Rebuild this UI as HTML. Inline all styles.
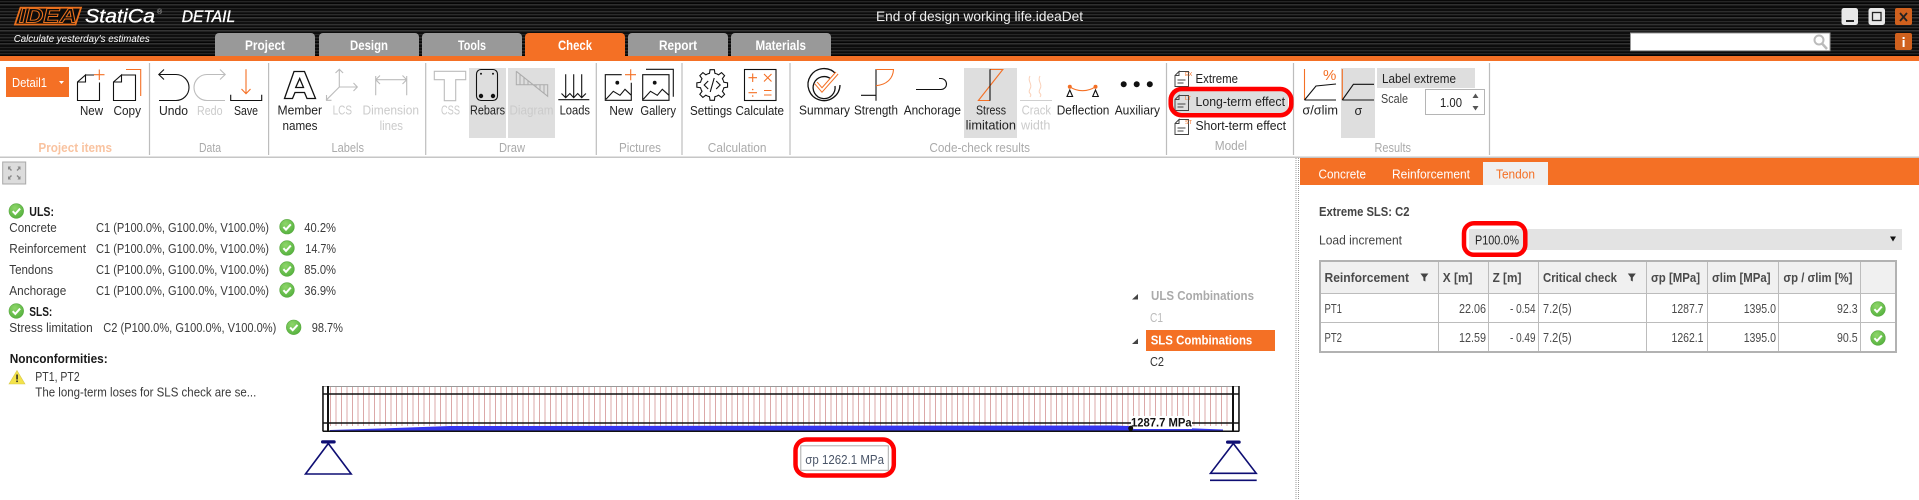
<!DOCTYPE html>
<html><head><meta charset="utf-8"><title>End of design working life.ideaDet</title>
<style>
html,body{margin:0;padding:0;width:1919px;height:500px;overflow:hidden;background:#fff}
#hd{position:absolute;left:0;top:0;width:1919px;height:56px;background:linear-gradient(180deg,rgba(0,0,0,.2),rgba(20,20,20,0) 40%,rgba(0,0,0,.2)),repeating-linear-gradient(180deg,#0d0d0d 0 1px,#2e2e2e 1px 2px,#161616 2px 3px,#060606 3px 4px,#383838 4px 5px,#242424 5px 6px,#0e0e0e 6px 8px,#2a2a2a 8px 9px,#111 9px 11px,#333 11px 12px,#1a1a1a 12px 13px)}
svg{position:absolute;left:0;top:0}
text{font-family:"Liberation Sans",sans-serif;font-size:12.5px;fill:#222;white-space:pre}
.d{fill:#cbcbcb}.l{fill:#aaa}.w{fill:#fff}.tab{fill:#fff;font-weight:bold;font-size:13.5px}
.s{font-size:12.5px;fill:#3a3a3a}.b{font-weight:bold;fill:#1a1a1a;font-size:13px}
.c{font-size:12.5px;fill:#4a4a4a}.h{font-size:12.5px;font-weight:bold;fill:#4a4a4a}
.k{fill:none;stroke:#111;stroke-width:1.1}.o{fill:none;stroke:#f47025;stroke-width:1.1}.g{fill:none;stroke:#bcbcbc;stroke-width:1.1}
.red{fill:none;stroke:#f00;stroke-width:4.5}
.sep{stroke:#bdbdbd;stroke-width:1.2}
</style></head><body>
<div id="hd"></div>
<svg width="1919" height="500" viewBox="0 0 1919 500" xmlns="http://www.w3.org/2000/svg">
<defs>
<radialGradient id="gr" cx=".4" cy=".3" r=".8"><stop offset="0" stop-color="#8fd66a"/><stop offset="1" stop-color="#4fae3a"/></radialGradient>
<g id="ok"><circle r="7.3" fill="url(#gr)" stroke="#58a83f" stroke-width=".6"/><path d="M-3.6 .2L-1 2.9 3.8-2.4" fill="none" stroke="#fff" stroke-width="2"/></g>
<path id="tooth" d="M11.09-4.59L11.69-2.7 15.35-2.16V2.16L11.69 2.7 11.09 4.59" fill="none" stroke="#111" stroke-width="1.1"/>
<path id="flt" d="M-4-4H4L1 0V4L-1 3V0Z" fill="#444"/>
<g id="doc"><path d="M4.5.5H14V15.5H.5V4.5L4.5.5V4.5H.5M3 9H11M3 12H9" fill="none" stroke="#444" stroke-width="1"/></g>
<pattern id="st" x="328" y="0" width="5.5" height="10" patternUnits="userSpaceOnUse"><rect x="2" width="1" height="10" fill="#dba8a8"/></pattern>
</defs>

<!-- header -->
<path d="M20.5 7.7H81L75.5 24.5H15Z" fill="#0c0c0c" stroke="#e8701e" stroke-width="1.8"/>
<text x="19" y="22.5" textLength="58" lengthAdjust="spacingAndGlyphs" style="font-size:20px;font-weight:bold;font-style:italic;fill:#0c0c0c;stroke:#e8701e;stroke-width:.9">IDEA</text>
<text x="85" y="22.7" textLength="70" lengthAdjust="spacingAndGlyphs" style="font-size:19px;font-style:italic;fill:#fff;stroke:#fff;stroke-width:.3">StatiCa</text>
<text x="157" y="14" style="font-size:7px;fill:#bbb">®</text>
<text x="181.7" y="22" textLength="53.5" lengthAdjust="spacingAndGlyphs" style="font-size:16.5px;font-style:italic;fill:#fff;stroke:#fff;stroke-width:.35">DETAIL</text>
<text x="13.7" y="42" textLength="136" lengthAdjust="spacingAndGlyphs" style="font-size:10px;font-style:italic;fill:#fff">Calculate yesterday's estimates</text>
<text x="876" y="21" textLength="207" lengthAdjust="spacingAndGlyphs" style="font-size:14px;fill:#eee">End of design working life.ideaDet</text>

<path d="M215 56V37a4 4 0 0 1 4-4H311a4 4 0 0 1 4 4V56Z" fill="#999"/>
<path d="M319 56V37a4 4 0 0 1 4-4H415a4 4 0 0 1 4 4V56Z" fill="#999"/>
<path d="M422 56V37a4 4 0 0 1 4-4H518a4 4 0 0 1 4 4V56Z" fill="#999"/>
<path d="M525 56V37a4 4 0 0 1 4-4H621a4 4 0 0 1 4 4V56Z" fill="#f47025"/>
<path d="M628 56V37a4 4 0 0 1 4-4H724a4 4 0 0 1 4 4V56Z" fill="#999"/>
<path d="M731 56V37a4 4 0 0 1 4-4H827a4 4 0 0 1 4 4V56Z" fill="#999"/>
<text class="tab" x="245" y="50" textLength="40" lengthAdjust="spacingAndGlyphs">Project</text>
<text class="tab" x="350" y="50" textLength="38" lengthAdjust="spacingAndGlyphs">Design</text>
<text class="tab" x="458" y="50" textLength="28" lengthAdjust="spacingAndGlyphs">Tools</text>
<text class="tab" x="558" y="50" textLength="34" lengthAdjust="spacingAndGlyphs">Check</text>
<text class="tab" x="659" y="50" textLength="38" lengthAdjust="spacingAndGlyphs">Report</text>
<text class="tab" x="755.5" y="50" textLength="50.5" lengthAdjust="spacingAndGlyphs">Materials</text>

<rect x="1630.5" y="33" width="199.5" height="17.7" fill="#fff" stroke="#999"/>
<circle cx="1819" cy="40" r="4.5" fill="none" stroke="#bbb" stroke-width="2"/><path d="M1822 43.5L1827 49" stroke="#bbb" stroke-width="2.5"/>
<rect x="1841.5" y="8" width="16.5" height="17" rx="2.5" fill="#e8e8e8"/><rect x="1846" y="20" width="8" height="2" fill="#222"/>
<rect x="1868.5" y="8" width="16.5" height="17" rx="2.5" fill="#e8e8e8"/><rect x="1872.5" y="12.5" width="8.5" height="8" fill="none" stroke="#222" stroke-width="1.3"/>
<rect x="1895" y="8" width="17" height="17" rx="2" fill="#d0611e"/><path d="M1900 13L1907 21M1907 13L1900 21" stroke="#222" stroke-width="1.8"/>
<rect x="1895" y="33" width="17" height="17" rx="2" fill="#d0611e"/><rect x="1902.6" y="37" width="2" height="2" fill="#fff"/><rect x="1902.6" y="40" width="2" height="7" fill="#fff"/>

<!-- ribbon -->
<rect x="0" y="56" width="1919" height="5" fill="#f47025"/>
<rect x="0" y="156.5" width="1919" height="1.5" fill="#c6c6c6"/>
<path class="sep" d="M149.5 63V155M268.6 63V155M425.7 63V155M596.3 63V155M682 63V155M790 63V155M1166.5 63V155M1293.5 63V155M1489.5 63V155"/>

<rect x="469" y="68" width="37" height="70" fill="#dedede"/>
<rect x="508" y="68" width="47" height="70" fill="#dedede"/>
<rect x="964" y="68" width="53" height="70" fill="#dedede"/>
<rect x="1341" y="68" width="34" height="70" fill="#dedede"/>
<rect x="1377" y="68" width="98" height="20" fill="#dedede"/>
<rect x="1172" y="90" width="116" height="23.5" fill="#dedede"/>

<rect x="6" y="67" width="63" height="30" fill="#f47025"/>
<text class="w" x="12" y="87" textLength="35" lengthAdjust="spacingAndGlyphs" style="font-size:13px">Detail1</text>
<path d="M59 81H64L61.5 84Z" fill="#fff"/>

<!-- New / Copy -->
<path class="k" d="M85.5 75H94M99.5 82.5V100.5H77.5V82L85.5 75V82H77.5"/>
<path class="o" d="M94 74.7H104.5M99.3 69.5V80"/>
<path class="k" d="M121.5 75H135.5V100.5H113.5V82L121.5 75V82H113.5"/>
<path class="o" d="M126 69.5H140.7V96"/>
<!-- Undo Redo Save -->
<path class="k" d="M164 69.5L158.8 74.5 164 79.5M159 74.5H176a13 13 0 0 1 0 26H159"/>
<path class="g" d="M220 69.5L225.2 74.5 220 79.5M225 74.5H207a13 13 0 0 0 0 26H225"/>
<path class="k" d="M230.7 94.7V100.5H261.7V94.7"/>
<path class="o" d="M246 69.3V93.7M241.5 89L246 93.7 250.5 89"/>
<!-- Labels -->
<path class="k" style="stroke-width:1.3" d="M294 71.5H304.5L315.5 98.5H307L304.5 92.5H295L292.5 98.5H284.5ZM299.7 78.5L303.5 87.5H295.7Z"/>
<path class="g" d="M339.3 69.3V87M335.5 73L339.3 69.3 343.1 73M339.3 87H357.3M353.5 83L357.3 87 353.5 91M339.3 87L326 100.3M326.5 95V100.3H331.5"/>
<path class="g" d="M375.7 76V95.3M406.7 76V95.3M375.7 79.7H406.7M380 75.5L375.7 79.7 380 84M402.5 75.5L406.7 79.7 402.5 84"/>
<!-- Draw -->
<path class="g" d="M434.3 71.3H465.7V79.7H455.7V100.7H444.3V79.7H434.3Z"/>
<rect class="k" x="476.5" y="69.5" width="21" height="31" rx="4.5"/>
<circle cx="481" cy="73.7" r="1" fill="#111"/><circle cx="493" cy="73.7" r="1" fill="#111"/><circle cx="481" cy="96" r="2.2" fill="#111"/><circle cx="493" cy="96" r="2.2" fill="#111"/>
<path fill="none" stroke="#ababab" d="M516.3 71.3V84.7H547.7V96.3L516.3 71.3M520 74.5V84.7M524 77.5V84.7M528 80.5V84.7M532 84.7V84M536 84.7V87.5M540 84.7V90.5M544 84.7V93.5"/>
<path class="k" d="M558.3 99.7H589.3M565.7 74.3V97.7M573.7 74.3V97.7M581.7 74.3V97.7M561.5 93.5L565.7 97.7 569.9 93.5 573.7 97.7 577.7 93.5 581.7 97.7 585.9 93.5"/>
<!-- Pictures -->
<path class="k" d="M621.7 74.7H605.3V100.3H631.3V82.7M606 99.3L613.3 91.3 620 95.3 625 89.3 631.3 95.3"/>
<circle cx="617.3" cy="82.7" r="1.9" fill="#111"/>
<path class="o" d="M625 74.7H636M630.7 69.2V80.2"/>
<path class="k" d="M642.7 74.7H669V100.3H642.7ZM646 69.3H673.3V96.7M643.3 99.3L650.5 91.3 657.3 95.3 662.3 89.3 669 95.3"/>
<circle cx="654.7" cy="82.7" r="1.9" fill="#111"/>
<!-- Calculation -->
<g transform="translate(712.2 85)"><use href="#tooth"/><use href="#tooth" transform="rotate(45)"/><use href="#tooth" transform="rotate(90)"/><use href="#tooth" transform="rotate(135)"/><use href="#tooth" transform="rotate(180)"/><use href="#tooth" transform="rotate(225)"/><use href="#tooth" transform="rotate(270)"/><use href="#tooth" transform="rotate(315)"/><path class="k" d="M-4-4L-8 0-4 4M4-4L8 0 4 4M2-7L-2 7"/></g>
<rect class="k" x="744.5" y="69.5" width="31.5" height="31"/>
<path class="o" d="M748.5 77.7H757M752.7 73.5V82M764 74L771.5 81.5M771.5 74L764 81.5M748.5 92.7H757M764 90.5H771.5M764 95H771.5"/><circle cx="752.7" cy="89.5" r=".8" fill="#f47025"/><circle cx="752.7" cy="96" r=".8" fill="#f47025"/>
<!-- Code-check -->
<path class="k" style="stroke-width:1.3" d="M836 74A16 16 0 1 0 840 85M831 79A11 11 0 1 0 835 86"/>
<path fill="none" stroke="#f47025" stroke-width="4" d="M816 83L822 90 837 73"/><path fill="none" stroke="#fff" stroke-width="2" d="M816 83L822 90 837 73"/>
<path class="k" d="M876 69.3V100.7M861 95.3H876"/><path class="o" d="M876 69.5H893.5C893 79 886 85 876 85.7"/>
<path class="k" d="M916 89.5H941a5.5 5.5 0 0 0 0-11H939"/>
<path class="o" d="M990 69.5H1002.8L978.4 100.5H990"/><path class="k" d="M990 69.3V100.7"/>
<path fill="none" stroke="#cfcfcf" d="M1020 100.5H1052"/><path fill="none" stroke="#fad0b8" d="M1030 76C1027 81 1033 84 1030 89S1033 93 1030 97M1040 76C1037 81 1043 84 1040 89S1043 93 1040 97"/>
<path class="o" d="M1069.8 86.7C1077 92 1088 92 1095.5 86.7"/><circle cx="1069.8" cy="86.7" r="2" fill="#f47025"/><circle cx="1095.5" cy="86.7" r="2" fill="#f47025"/>
<path class="k" d="M1069.8 90L1067 96.5H1072.6ZM1095.5 90L1092.7 96.5H1098.3Z"/>
<circle cx="1123.7" cy="84.3" r="3" fill="#111"/><circle cx="1136.7" cy="84.3" r="3" fill="#111"/><circle cx="1149.8" cy="84.3" r="3" fill="#111"/>
<!-- Model -->
<use href="#doc" x="1174.5" y="71"/><use href="#doc" x="1174.5" y="95"/><use href="#doc" x="1174.5" y="119"/>
<text x="1185" y="76" style="font-size:5.5px;fill:#f47025">EX</text><text x="1185" y="100" style="font-size:5.5px;fill:#f47025">LT</text><text x="1185" y="124" style="font-size:5.5px;fill:#f47025">ST</text>
<rect class="red" x="1170.7" y="89" width="120.6" height="26.2" rx="11"/>
<!-- Results -->
<path class="o" d="M1304.5 69V100"/><path class="k" d="M1304.5 100H1336M1304.5 100L1316 86 1336 84"/>
<text x="1323" y="80" style="font-size:15px;fill:#f47025">%</text>
<path class="o" d="M1342.3 69V100"/><path class="k" d="M1342.3 100H1374M1342.3 100L1353.4 84.3H1374"/>
<rect x="1425.5" y="89.5" width="59" height="25" fill="#fff" stroke="#b5b5b5"/>
<path d="M1472.5 98L1475.5 93.5 1478.5 98ZM1472.5 106L1475.5 110.5 1478.5 106Z" fill="#555"/>

<!-- ribbon text -->
<text x="80" y="115" textLength="23" lengthAdjust="spacingAndGlyphs">New</text>
<text x="113.5" y="115" textLength="27.5" lengthAdjust="spacingAndGlyphs">Copy</text>
<text x="159" y="115" textLength="29" lengthAdjust="spacingAndGlyphs">Undo</text>
<text class="d" x="197" y="115" textLength="25.5" lengthAdjust="spacingAndGlyphs">Redo</text>
<text x="234" y="115" textLength="24" lengthAdjust="spacingAndGlyphs">Save</text>
<text x="277.5" y="114.5" textLength="44.5" lengthAdjust="spacingAndGlyphs">Member</text>
<text x="282.5" y="130" textLength="35" lengthAdjust="spacingAndGlyphs">names</text>
<text class="d" x="332.6" y="114.5" textLength="19.4" lengthAdjust="spacingAndGlyphs">LCS</text>
<text class="d" x="362.5" y="114.5" textLength="56.5" lengthAdjust="spacingAndGlyphs">Dimension</text>
<text class="d" x="379.6" y="130" textLength="23.4" lengthAdjust="spacingAndGlyphs">lines</text>
<text class="d" x="441" y="114.5" textLength="19" lengthAdjust="spacingAndGlyphs">CSS</text>
<text x="470" y="114.5" textLength="35" lengthAdjust="spacingAndGlyphs">Rebars</text>
<text class="d" x="509.5" y="114.5" textLength="44" lengthAdjust="spacingAndGlyphs">Diagram</text>
<text x="559.6" y="114.5" textLength="30.4" lengthAdjust="spacingAndGlyphs">Loads</text>
<text x="609.4" y="115" textLength="23.6" lengthAdjust="spacingAndGlyphs">New</text>
<text x="640.4" y="115" textLength="35.6" lengthAdjust="spacingAndGlyphs">Gallery</text>
<text x="690" y="115" textLength="42" lengthAdjust="spacingAndGlyphs">Settings</text>
<text x="735.5" y="115" textLength="48.5" lengthAdjust="spacingAndGlyphs">Calculate</text>
<text x="799" y="114.5" textLength="51" lengthAdjust="spacingAndGlyphs">Summary</text>
<text x="854" y="114.5" textLength="44" lengthAdjust="spacingAndGlyphs">Strength</text>
<text x="903.7" y="114.5" textLength="57.3" lengthAdjust="spacingAndGlyphs">Anchorage</text>
<text x="976" y="114.5" textLength="30" lengthAdjust="spacingAndGlyphs">Stress</text>
<text x="965.7" y="129.5" textLength="50.3" lengthAdjust="spacingAndGlyphs">limitation</text>
<text class="d" x="1021.6" y="114.5" textLength="29.4" lengthAdjust="spacingAndGlyphs">Crack</text>
<text class="d" x="1021" y="129.5" textLength="29.4" lengthAdjust="spacingAndGlyphs">width</text>
<text x="1056.7" y="114.5" textLength="52.7" lengthAdjust="spacingAndGlyphs">Deflection</text>
<text x="1114.7" y="114.5" textLength="45.3" lengthAdjust="spacingAndGlyphs">Auxiliary</text>
<text x="1195.5" y="83" textLength="42.5" lengthAdjust="spacingAndGlyphs">Extreme</text>
<text x="1195.5" y="106" textLength="89.5" lengthAdjust="spacingAndGlyphs">Long-term effect</text>
<text x="1195.5" y="130" textLength="90.5" lengthAdjust="spacingAndGlyphs">Short-term effect</text>
<text x="1302.4" y="114.5" textLength="35.6" lengthAdjust="spacingAndGlyphs">σ/σlim</text>
<text x="1354.5" y="115">σ</text>
<text x="1382" y="83" textLength="74" lengthAdjust="spacingAndGlyphs">Label extreme</text>
<text style="fill:#444" x="1381" y="103" textLength="27" lengthAdjust="spacingAndGlyphs">Scale</text>
<text x="1440" y="107" textLength="22" lengthAdjust="spacingAndGlyphs">1.00</text>

<text x="38.4" y="152" textLength="73.6" lengthAdjust="spacingAndGlyphs" style="fill:#f9c3a0;font-weight:bold">Project items</text>
<text class="l" x="199" y="152" textLength="22" lengthAdjust="spacingAndGlyphs">Data</text>
<text class="l" x="331.5" y="152" textLength="32.5" lengthAdjust="spacingAndGlyphs">Labels</text>
<text class="l" x="499" y="152" textLength="26" lengthAdjust="spacingAndGlyphs">Draw</text>
<text class="l" x="619" y="152" textLength="42" lengthAdjust="spacingAndGlyphs">Pictures</text>
<text class="l" x="707.8" y="152" textLength="58.7" lengthAdjust="spacingAndGlyphs">Calculation</text>
<text class="l" x="929.4" y="152" textLength="100.6" lengthAdjust="spacingAndGlyphs">Code-check results</text>
<text class="l" x="1214.7" y="150" textLength="32.3" lengthAdjust="spacingAndGlyphs">Model</text>
<text class="l" x="1374.5" y="152" textLength="36.5" lengthAdjust="spacingAndGlyphs">Results</text>

<!-- expand button -->
<rect x="2.7" y="162" width="23" height="22" fill="#dcdcdc" stroke="#a8a8a8"/>
<path d="M8 166.5H11L10 168 12 170 11 171 9 169 8 170ZM20.5 166.5H17.5L18.5 168 16.5 170 17.5 171 19.5 169 20.5 170ZM8 179.5H11L10 178 12 176 11 175 9 177 8 176ZM20.5 179.5H17.5L18.5 178 16.5 176 17.5 175 19.5 177 20.5 176Z" fill="#888"/>

<!-- left summary -->
<use href="#ok" x="16.3" y="211"/>
<text class="b" x="29.3" y="216" textLength="24.7" lengthAdjust="spacingAndGlyphs">ULS:</text>
<text class="s" x="9.3" y="232" textLength="47.4" lengthAdjust="spacingAndGlyphs">Concrete</text>
<text class="s" x="96" y="232" textLength="173" lengthAdjust="spacingAndGlyphs">C1 (P100.0%, G100.0%, V100.0%)</text>
<use href="#ok" x="287" y="226.7"/><text class="s" x="304.3" y="232" textLength="31.7" lengthAdjust="spacingAndGlyphs">40.2%</text>
<text class="s" x="9.3" y="253" textLength="76.7" lengthAdjust="spacingAndGlyphs">Reinforcement</text>
<text class="s" x="96" y="253" textLength="173" lengthAdjust="spacingAndGlyphs">C1 (P100.0%, G100.0%, V100.0%)</text>
<use href="#ok" x="287" y="248"/><text class="s" x="305.3" y="253" textLength="30.7" lengthAdjust="spacingAndGlyphs">14.7%</text>
<text class="s" x="9.3" y="274" textLength="43.7" lengthAdjust="spacingAndGlyphs">Tendons</text>
<text class="s" x="96" y="274" textLength="173" lengthAdjust="spacingAndGlyphs">C1 (P100.0%, G100.0%, V100.0%)</text>
<use href="#ok" x="287" y="269"/><text class="s" x="304.3" y="274" textLength="31.7" lengthAdjust="spacingAndGlyphs">85.0%</text>
<text class="s" x="9.3" y="295" textLength="57" lengthAdjust="spacingAndGlyphs">Anchorage</text>
<text class="s" x="96" y="295" textLength="173" lengthAdjust="spacingAndGlyphs">C1 (P100.0%, G100.0%, V100.0%)</text>
<use href="#ok" x="287" y="290"/><text class="s" x="304.3" y="295" textLength="31.7" lengthAdjust="spacingAndGlyphs">36.9%</text>
<use href="#ok" x="16.3" y="311"/>
<text class="b" x="29.3" y="316" textLength="23" lengthAdjust="spacingAndGlyphs">SLS:</text>
<text class="s" x="9.3" y="332" textLength="83.4" lengthAdjust="spacingAndGlyphs">Stress limitation</text>
<text class="s" x="103.3" y="332" textLength="173" lengthAdjust="spacingAndGlyphs">C2 (P100.0%, G100.0%, V100.0%)</text>
<use href="#ok" x="293.7" y="327.3"/><text class="s" x="311.7" y="332" textLength="31.3" lengthAdjust="spacingAndGlyphs">98.7%</text>
<text class="b" x="9.7" y="363" textLength="98" lengthAdjust="spacingAndGlyphs">Nonconformities:</text>
<path d="M17 370.5L25 384H9Z" fill="#f3e24a" stroke="#d8c94a" stroke-width=".6"/><rect x="16.3" y="374.5" width="1.5" height="5" fill="#222"/><rect x="16.3" y="380.5" width="1.5" height="1.6" fill="#222"/>
<text class="s" x="35.3" y="381" textLength="44.4" lengthAdjust="spacingAndGlyphs">PT1, PT2</text>
<text class="s" x="35.3" y="396.5" textLength="221" lengthAdjust="spacingAndGlyphs">The long-term loses for SLS check are se...</text>

<!-- tree -->
<path d="M1132 299.5H1138V294Z" fill="#444"/>
<text x="1151" y="300" textLength="103" lengthAdjust="spacingAndGlyphs" style="font-weight:bold;fill:#aaa">ULS Combinations</text>
<text x="1150" y="322" textLength="13" lengthAdjust="spacingAndGlyphs" style="fill:#bbb">C1</text>
<rect x="1146" y="330" width="129" height="21" fill="#f47025"/>
<path d="M1132 344H1138V338.5Z" fill="#444"/>
<text x="1150.7" y="344.5" textLength="101.6" lengthAdjust="spacingAndGlyphs" style="font-weight:bold;fill:#fff">SLS Combinations</text>
<text x="1150" y="366" textLength="14" lengthAdjust="spacingAndGlyphs" style="fill:#333">C2</text>

<!-- beam -->
<rect x="328" y="387" width="905" height="39" fill="url(#st)"/>
<path d="M330 430L380 428.5 450 426 1115 425.5 1223 429.5V430.5H330Z" fill="#3535ee"/>
<rect x="322.7" y="386.5" width="916" height="44.5" fill="none" stroke="#9a9a9a" stroke-width="1"/>
<path stroke="#111" stroke-width="1.5" fill="none" d="M323 394H1239M323 423H1239M323 431.2H1239M323 386V431.5M1239 386V431.5"/>
<path stroke="#111" stroke-width="2" d="M328 386V431M1233 386V431"/>
<rect x="1131" y="416" width="61" height="13" fill="#fff"/>
<circle cx="1130.7" cy="428.3" r="2.5" fill="#111"/>
<text x="1131" y="426.5" textLength="60.7" lengthAdjust="spacingAndGlyphs" style="font-weight:bold;font-size:12px;fill:#111">1287.7 MPa</text>
<rect x="321" y="440.3" width="14.7" height="3.2" rx="1.6" fill="#0e0e73"/>
<path d="M328.3 443.5L305.5 474H351.2Z" fill="none" stroke="#0e0e73" stroke-width="1.6"/>
<rect x="1226" y="440.5" width="14.7" height="3.2" rx="1.6" fill="#0e0e73"/>
<path d="M1233.3 443.5L1210.5 473.3H1256.2Z" fill="none" stroke="#0e0e73" stroke-width="1.6"/>
<path d="M1210 480.3H1256.7" stroke="#0e0e73" stroke-width="1.6"/>
<rect x="800.8" y="445.8" width="87.5" height="24.5" fill="#fff" stroke="#aaa"/>
<text x="805.3" y="464" textLength="78.7" lengthAdjust="spacingAndGlyphs" style="font-size:12.5px;fill:#4a5568">σp 1262.1 MPa</text>
<rect class="red" x="795.5" y="439.5" width="98.3" height="36" rx="11"/>

<!-- splitter -->
<path d="M1296 158V500M1298.5 158V500" stroke="#999" stroke-width="1" stroke-dasharray="1 1"/>

<!-- right panel -->
<rect x="1300" y="158" width="619" height="27" fill="#f47025"/>
<rect x="1483" y="162" width="65" height="23" fill="#f0f0f0"/>
<text class="w" x="1318.5" y="178.5" textLength="47.5" lengthAdjust="spacingAndGlyphs">Concrete</text>
<text class="w" x="1392" y="178.5" textLength="78" lengthAdjust="spacingAndGlyphs">Reinforcement</text>
<text x="1496" y="178.5" textLength="39" lengthAdjust="spacingAndGlyphs" style="fill:#f47025">Tendon</text>
<text x="1319" y="216" textLength="90.5" lengthAdjust="spacingAndGlyphs" style="font-weight:bold;font-size:12.5px;fill:#444">Extreme SLS: C2</text>
<text x="1319" y="244.5" textLength="83" lengthAdjust="spacingAndGlyphs" style="fill:#444">Load increment</text>
<rect x="1469" y="229" width="433" height="21" fill="#e3e3e3"/>
<text x="1475" y="244.5" textLength="44" lengthAdjust="spacingAndGlyphs">P100.0%</text>
<path d="M1890 236.5H1896L1893 241.5Z" fill="#111"/>
<rect class="red" x="1464" y="223.2" width="61.3" height="31.6" rx="10"/>

<rect x="1320" y="261" width="576" height="32.5" fill="#f0f0f0"/>
<path stroke="#bcbcbc" stroke-width="1" fill="none" d="M1320 293.5H1896M1320 322.5H1896M1438.5 261V352M1488.5 261V352M1538.5 261V352M1646.5 261V352M1707.5 261V352M1778.5 261V352M1860.5 261V352"/>
<rect x="1320" y="261" width="576" height="91" fill="none" stroke="#b2b2b2" stroke-width="2"/>
<text class="h" x="1324.5" y="282" textLength="84.5" lengthAdjust="spacingAndGlyphs">Reinforcement</text>
<use href="#flt" x="1424.4" y="277.5"/>
<text class="h" x="1442.8" y="282" textLength="29.7" lengthAdjust="spacingAndGlyphs">X [m]</text>
<text class="h" x="1492.6" y="282" textLength="28.8" lengthAdjust="spacingAndGlyphs">Z [m]</text>
<text class="h" x="1543" y="282" textLength="74" lengthAdjust="spacingAndGlyphs">Critical check</text>
<use href="#flt" x="1631.8" y="277.5"/>
<text class="h" x="1651" y="282" textLength="49" lengthAdjust="spacingAndGlyphs">σp [MPa]</text>
<text class="h" x="1712" y="282" textLength="58.5" lengthAdjust="spacingAndGlyphs">σlim [MPa]</text>
<text class="h" x="1783.4" y="282" textLength="69" lengthAdjust="spacingAndGlyphs">σp / σlim [%]</text>

<text class="c" x="1324.5" y="313" textLength="17.5" lengthAdjust="spacingAndGlyphs">PT1</text>
<text class="c" x="1459" y="313" textLength="27" lengthAdjust="spacingAndGlyphs">22.06</text>
<text class="c" x="1510" y="313" textLength="25.5" lengthAdjust="spacingAndGlyphs">- 0.54</text>
<text class="c" x="1543" y="313" textLength="28.6" lengthAdjust="spacingAndGlyphs">7.2(5)</text>
<text class="c" x="1671.5" y="313" textLength="32" lengthAdjust="spacingAndGlyphs">1287.7</text>
<text class="c" x="1743.7" y="313" textLength="32.3" lengthAdjust="spacingAndGlyphs">1395.0</text>
<text class="c" x="1837" y="313" textLength="20.6" lengthAdjust="spacingAndGlyphs">92.3</text>
<use href="#ok" x="1878" y="309"/>
<text class="c" x="1324.5" y="342" textLength="17.5" lengthAdjust="spacingAndGlyphs">PT2</text>
<text class="c" x="1459" y="342" textLength="27" lengthAdjust="spacingAndGlyphs">12.59</text>
<text class="c" x="1510" y="342" textLength="25.5" lengthAdjust="spacingAndGlyphs">- 0.49</text>
<text class="c" x="1543" y="342" textLength="28.6" lengthAdjust="spacingAndGlyphs">7.2(5)</text>
<text class="c" x="1671.5" y="342" textLength="32" lengthAdjust="spacingAndGlyphs">1262.1</text>
<text class="c" x="1743.7" y="342" textLength="32.3" lengthAdjust="spacingAndGlyphs">1395.0</text>
<text class="c" x="1837" y="342" textLength="20.6" lengthAdjust="spacingAndGlyphs">90.5</text>
<use href="#ok" x="1878" y="338"/>
</svg>
</body></html>
